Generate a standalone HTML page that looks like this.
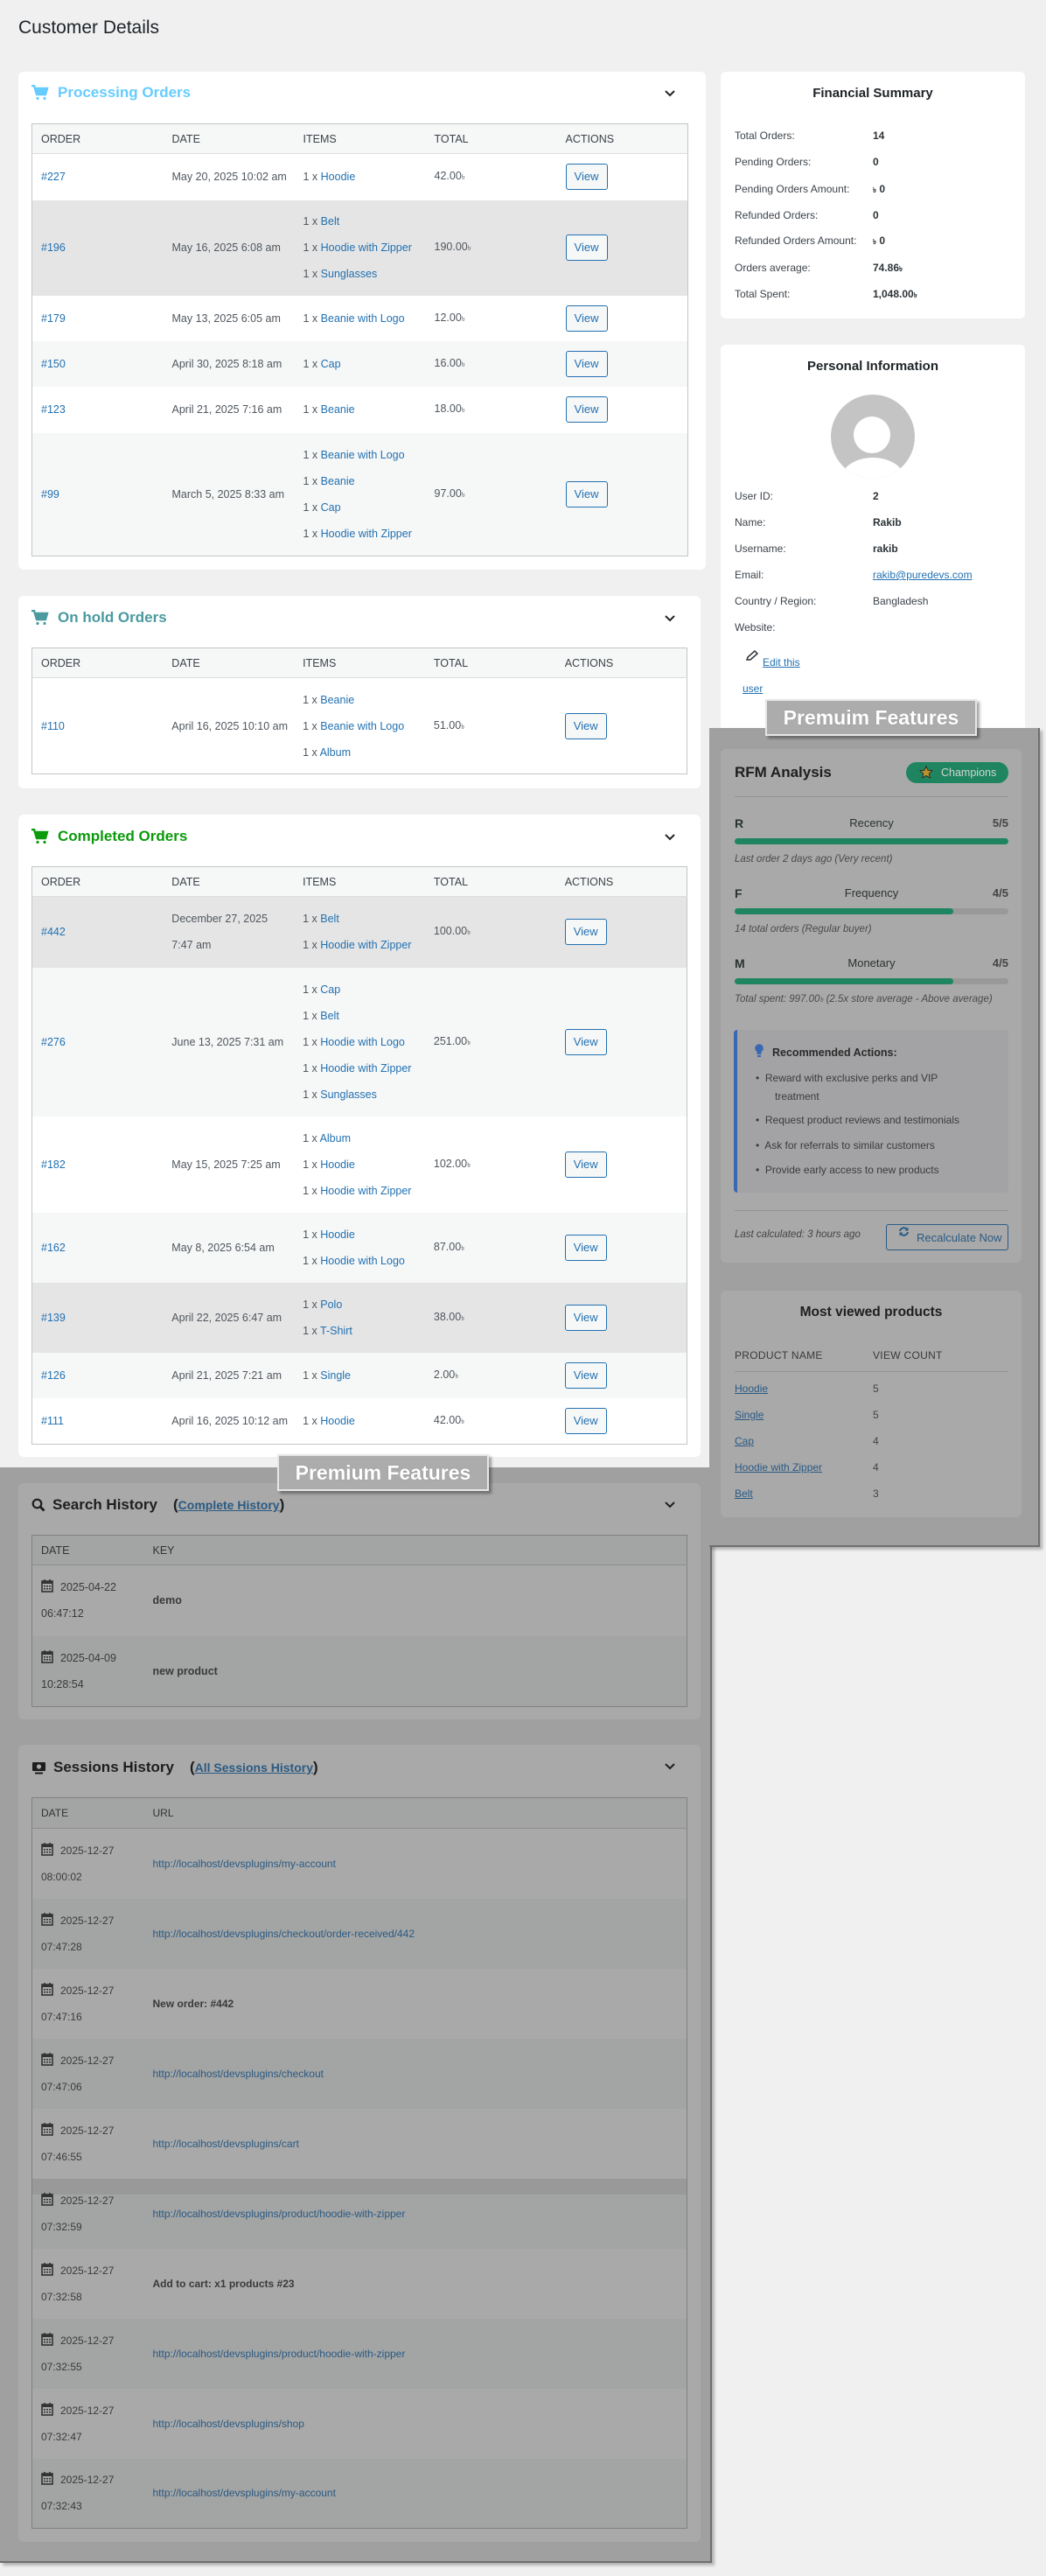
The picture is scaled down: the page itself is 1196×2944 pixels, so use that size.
<!DOCTYPE html>
<html><head><meta charset="utf-8">
<style>
*{box-sizing:border-box;margin:0;padding:0}
body{width:1196px;height:2944px;background:#f0f0f1;font-family:"Liberation Sans",sans-serif;position:relative;overflow:hidden;color:#50575e}
.abs{position:absolute}
.p{position:absolute;background:#fff;border-radius:6px}
.h{position:absolute;font-size:17px;font-weight:bold;display:flex;align-items:center;gap:10px;height:24px}
.chev{position:absolute;width:14px;height:10px}
table{position:absolute;border-collapse:collapse;table-layout:fixed;font-size:12.5px;border:1px solid #c3c4c7}
th{height:34px;text-align:left;font-weight:normal;padding:0 10px;color:#3c434a;background:#f6f7f7;border-bottom:1px solid #dcdcde;font-size:12.5px}
td{padding:0 10px;vertical-align:middle;color:#50575e;white-space:nowrap}
a{color:#2271b1;text-decoration:none}
.it div{line-height:30px}
.btn{display:inline-block;width:48px;height:30px;border:1px solid #2271b1;border-radius:3px;background:#f6f7f7;color:#2271b1;font-size:13px;text-align:center;line-height:28px}
.g{background:#e5e5e5}.l{background:#f6f7f7}.w{background:#fff}
.tk{font-size:8px}
.fr{position:absolute;left:16px;font-size:12px;color:#3c434a}
.fv{position:absolute;left:174px;font-size:12px;font-weight:bold;color:#2c3338}
.ov{position:absolute;background:#a0a0a0;border-right:2px solid #6f6f6f;border-bottom:2px solid #6f6f6f;box-shadow:3px 3px 3px rgba(0,0,0,.25)}
.op{position:absolute;background:#a9a9a9;border-radius:6px}
.lab{position:absolute;background:#acacac;border:2px solid #e6e6e6;box-shadow:3px 3px 3px rgba(0,0,0,.35);color:#fff;font-weight:bold;text-align:center;text-shadow:0 0 1px #777}
table.o{border:1px solid #818181}
table.o th{background:#a3a4a4;color:#333;border-bottom:1px solid #8d8d8d}
table.o td{color:#3a3a3a}
table.o a{color:#2a5a82}
.oa{background:#a9a9a9}.ob{background:#a3a4a4}
.cal{display:inline-block;vertical-align:-2px;margin-right:8px}
</style></head><body>

<div class="abs" style="left:21px;top:20px;font-size:21px;color:#1d2327">Customer Details</div>

<div class="p" style="left:21px;top:82px;width:786px;height:569px"></div>
<div class="h" style="left:36px;top:94px;color:#66ccff">
<svg width="20" height="18" viewBox="0 0 20 18"><path d="M0 1h3l3 10h10l2-7H5" fill="none" stroke="#66ccff" stroke-width="2.4"/><rect x="5" y="4" width="12" height="6" fill="#66ccff"/><circle cx="7" cy="15.5" r="1.6" fill="#66ccff"/><circle cx="15" cy="15.5" r="1.6" fill="#66ccff"/></svg>Processing Orders</div>
<svg class="chev" style="left:759px;top:102px" viewBox="0 0 14 10"><path d="M2 2l5 5 5-5" fill="none" stroke="#1d2327" stroke-width="2"/></svg>
<table style="left:36px;top:141px;width:751px">
<tr><th>ORDER</th><th>DATE</th><th>ITEMS</th><th>TOTAL</th><th>ACTIONS</th></tr>
<tr class="w" style="height:53px"><td><a>#227</a></td><td>May 20, 2025 10:02 am</td><td class="it"><div>1 x <a>Hoodie</a></div></td><td>42.00<span class="tk">৳</span></td><td><span class="btn">View</span></td></tr>
<tr class="g" style="height:109px"><td><a>#196</a></td><td>May 16, 2025 6:08 am</td><td class="it"><div>1 x <a>Belt</a></div><div>1 x <a>Hoodie with Zipper</a></div><div>1 x <a>Sunglasses</a></div></td><td>190.00<span class="tk">৳</span></td><td><span class="btn">View</span></td></tr>
<tr class="w" style="height:52px"><td><a>#179</a></td><td>May 13, 2025 6:05 am</td><td class="it"><div>1 x <a>Beanie with Logo</a></div></td><td>12.00<span class="tk">৳</span></td><td><span class="btn">View</span></td></tr>
<tr class="l" style="height:52px"><td><a>#150</a></td><td>April 30, 2025 8:18 am</td><td class="it"><div>1 x <a>Cap</a></div></td><td>16.00<span class="tk">৳</span></td><td><span class="btn">View</span></td></tr>
<tr class="w" style="height:53px"><td><a>#123</a></td><td>April 21, 2025 7:16 am</td><td class="it"><div>1 x <a>Beanie</a></div></td><td>18.00<span class="tk">৳</span></td><td><span class="btn">View</span></td></tr>
<tr class="l" style="height:141px"><td><a>#99</a></td><td>March 5, 2025 8:33 am</td><td class="it"><div>1 x <a>Beanie with Logo</a></div><div>1 x <a>Beanie</a></div><div>1 x <a>Cap</a></div><div>1 x <a>Hoodie with Zipper</a></div></td><td>97.00<span class="tk">৳</span></td><td><span class="btn">View</span></td></tr>
</table>

<div class="p" style="left:21px;top:681px;width:780px;height:220px"></div>
<div class="h" style="left:36px;top:694px;color:#4a9aa0">
<svg width="20" height="18" viewBox="0 0 20 18"><path d="M0 1h3l3 10h10l2-7H5" fill="none" stroke="#4a9aa0" stroke-width="2.4"/><rect x="5" y="4" width="12" height="6" fill="#4a9aa0"/><circle cx="7" cy="15.5" r="1.6" fill="#4a9aa0"/><circle cx="15" cy="15.5" r="1.6" fill="#4a9aa0"/></svg>On hold Orders</div>
<svg class="chev" style="left:759px;top:702px" viewBox="0 0 14 10"><path d="M2 2l5 5 5-5" fill="none" stroke="#1d2327" stroke-width="2"/></svg>
<table style="left:36px;top:740px;width:750px">
<tr><th>ORDER</th><th>DATE</th><th>ITEMS</th><th>TOTAL</th><th>ACTIONS</th></tr>
<tr class="w" style="height:110px"><td><a>#110</a></td><td>April 16, 2025 10:10 am</td><td class="it"><div>1 x <a>Beanie</a></div><div>1 x <a>Beanie with Logo</a></div><div>1 x <a>Album</a></div></td><td>51.00<span class="tk">৳</span></td><td><span class="btn">View</span></td></tr>
</table>

<div class="p" style="left:21px;top:931px;width:780px;height:734px"></div>
<div class="h" style="left:36px;top:944px;color:#0a9a0a">
<svg width="20" height="18" viewBox="0 0 20 18"><path d="M0 1h3l3 10h10l2-7H5" fill="none" stroke="#0a9a0a" stroke-width="2.4"/><rect x="5" y="4" width="12" height="6" fill="#0a9a0a"/><circle cx="7" cy="15.5" r="1.6" fill="#0a9a0a"/><circle cx="15" cy="15.5" r="1.6" fill="#0a9a0a"/></svg>Completed Orders</div>
<svg class="chev" style="left:759px;top:952px" viewBox="0 0 14 10"><path d="M2 2l5 5 5-5" fill="none" stroke="#1d2327" stroke-width="2"/></svg>
<table style="left:36px;top:990px;width:750px">
<tr><th>ORDER</th><th>DATE</th><th>ITEMS</th><th>TOTAL</th><th>ACTIONS</th></tr>
<tr class="g" style="height:81px"><td><a>#442</a></td><td style="line-height:30px">December 27, 2025<br>7:47 am</td><td class="it"><div>1 x <a>Belt</a></div><div>1 x <a>Hoodie with Zipper</a></div></td><td>100.00<span class="tk">৳</span></td><td><span class="btn">View</span></td></tr>
<tr class="l" style="height:170px"><td><a>#276</a></td><td>June 13, 2025 7:31 am</td><td class="it"><div>1 x <a>Cap</a></div><div>1 x <a>Belt</a></div><div>1 x <a>Hoodie with Logo</a></div><div>1 x <a>Hoodie with Zipper</a></div><div>1 x <a>Sunglasses</a></div></td><td>251.00<span class="tk">৳</span></td><td><span class="btn">View</span></td></tr>
<tr class="w" style="height:110px"><td><a>#182</a></td><td>May 15, 2025 7:25 am</td><td class="it"><div>1 x <a>Album</a></div><div>1 x <a>Hoodie</a></div><div>1 x <a>Hoodie with Zipper</a></div></td><td>102.00<span class="tk">৳</span></td><td><span class="btn">View</span></td></tr>
<tr class="l" style="height:80px"><td><a>#162</a></td><td>May 8, 2025 6:54 am</td><td class="it"><div>1 x <a>Hoodie</a></div><div>1 x <a>Hoodie with Logo</a></div></td><td>87.00<span class="tk">৳</span></td><td><span class="btn">View</span></td></tr>
<tr class="g" style="height:80px"><td><a>#139</a></td><td>April 22, 2025 6:47 am</td><td class="it"><div>1 x <a>Polo</a></div><div>1 x <a>T-Shirt</a></div></td><td>38.00<span class="tk">৳</span></td><td><span class="btn">View</span></td></tr>
<tr class="l" style="height:52px"><td><a>#126</a></td><td>April 21, 2025 7:21 am</td><td class="it"><div>1 x <a>Single</a></div></td><td>2.00<span class="tk">৳</span></td><td><span class="btn">View</span></td></tr>
<tr class="w" style="height:53px"><td><a>#111</a></td><td>April 16, 2025 10:12 am</td><td class="it"><div>1 x <a>Hoodie</a></div></td><td>42.00<span class="tk">৳</span></td><td><span class="btn">View</span></td></tr>
</table>

<div class="ov" style="left:0;top:1677px;width:814px;height:1252px"></div>
<div class="op" style="left:21px;top:1695px;width:780px;height:270px"></div>
<div class="h" style="left:36px;top:1708px;color:#1e1e1e;gap:8px">
<svg width="16" height="16" viewBox="0 0 16 16"><circle cx="6.5" cy="6.5" r="4.8" fill="none" stroke="#1e1e1e" stroke-width="2.2"/><path d="M10 10l4.5 4.5" stroke="#1e1e1e" stroke-width="2.8"/></svg>Search History <span style="margin-left:10px">(<a style="color:#2a5a82;text-decoration:underline;font-size:14px">Complete History</a>)</span></div>
<svg class="chev" style="left:759px;top:1715px" viewBox="0 0 14 10"><path d="M2 2l5 5 5-5" fill="none" stroke="#1e1e1e" stroke-width="2"/></svg>
<table class="o" style="left:36px;top:1754px;width:750px">
<col style="width:128px"><col>
<tr><th>DATE</th><th>KEY</th></tr>
<tr class="oa" style="height:81px"><td style="line-height:30px"><svg class="cal" width="14" height="16" viewBox="0 0 14 16"><rect x="1" y="3" width="12" height="12" fill="none" stroke="#333" stroke-width="1.6"/><rect x="1" y="3" width="12" height="3" fill="#333"/><path d="M4 1v4M10 1v4" stroke="#333" stroke-width="1.6"/><path d="M3 8h2v1.5H3zM6 8h2v1.5H6zM9 8h2v1.5H9zM3 11h2v1.5H3zM6 11h2v1.5H6zM9 11h2v1.5H9z" fill="#333"/></svg>2025-04-22<br>06:47:12</td><td style="font-weight:bold">demo</td></tr>
<tr class="ob" style="height:81px"><td style="line-height:30px"><svg class="cal" width="14" height="16" viewBox="0 0 14 16"><rect x="1" y="3" width="12" height="12" fill="none" stroke="#333" stroke-width="1.6"/><rect x="1" y="3" width="12" height="3" fill="#333"/><path d="M4 1v4M10 1v4" stroke="#333" stroke-width="1.6"/><path d="M3 8h2v1.5H3zM6 8h2v1.5H6zM9 8h2v1.5H9zM3 11h2v1.5H3zM6 11h2v1.5H6zM9 11h2v1.5H9z" fill="#333"/></svg>2025-04-09<br>10:28:54</td><td style="font-weight:bold">new product</td></tr>
</table>

<div class="op" style="left:21px;top:1994px;width:780px;height:911px"></div>
<div class="h" style="left:36px;top:2008px;color:#1e1e1e;gap:8px">
<svg width="17" height="15" viewBox="0 0 17 15"><rect x="1" y="1" width="15" height="10" rx="1" fill="#1e1e1e"/><circle cx="8.5" cy="6" r="2.6" fill="#a9a9a9"/><rect x="4" y="12.5" width="9" height="2" fill="#1e1e1e"/></svg>Sessions History <span style="margin-left:10px">(<a style="color:#2a5a82;text-decoration:underline;font-size:14px">All Sessions History</a>)</span></div>
<svg class="chev" style="left:759px;top:2014px" viewBox="0 0 14 10"><path d="M2 2l5 5 5-5" fill="none" stroke="#1e1e1e" stroke-width="2"/></svg>
<table class="o" style="left:36px;top:2054px;width:750px;font-size:12px">
<col style="width:128px"><col>
<tr><th style="height:35px;font-size:12px">DATE</th><th style="font-size:12px">URL</th></tr>
<tr class="oa" style="height:80px"><td style="line-height:30px"><svg class="cal" width="14" height="16" viewBox="0 0 14 16"><rect x="1" y="3" width="12" height="12" fill="none" stroke="#333" stroke-width="1.6"/><rect x="1" y="3" width="12" height="3" fill="#333"/><path d="M4 1v4M10 1v4" stroke="#333" stroke-width="1.6"/><path d="M3 8h2v1.5H3zM6 8h2v1.5H6zM9 8h2v1.5H9zM3 11h2v1.5H3zM6 11h2v1.5H6zM9 11h2v1.5H9z" fill="#333"/></svg>2025-12-27<br>08:00:02</td><td><a>http://localhost/devsplugins/my-account</a></td></tr>
<tr class="ob" style="height:80px"><td style="line-height:30px"><svg class="cal" width="14" height="16" viewBox="0 0 14 16"><rect x="1" y="3" width="12" height="12" fill="none" stroke="#333" stroke-width="1.6"/><rect x="1" y="3" width="12" height="3" fill="#333"/><path d="M4 1v4M10 1v4" stroke="#333" stroke-width="1.6"/><path d="M3 8h2v1.5H3zM6 8h2v1.5H6zM9 8h2v1.5H9zM3 11h2v1.5H3zM6 11h2v1.5H6zM9 11h2v1.5H9z" fill="#333"/></svg>2025-12-27<br>07:47:28</td><td><a>http://localhost/devsplugins/checkout/order-received/442</a></td></tr>
<tr class="oa" style="height:80px"><td style="line-height:30px"><svg class="cal" width="14" height="16" viewBox="0 0 14 16"><rect x="1" y="3" width="12" height="12" fill="none" stroke="#333" stroke-width="1.6"/><rect x="1" y="3" width="12" height="3" fill="#333"/><path d="M4 1v4M10 1v4" stroke="#333" stroke-width="1.6"/><path d="M3 8h2v1.5H3zM6 8h2v1.5H6zM9 8h2v1.5H9zM3 11h2v1.5H3zM6 11h2v1.5H6zM9 11h2v1.5H9z" fill="#333"/></svg>2025-12-27<br>07:47:16</td><td style="font-weight:bold">New order: #442</td></tr>
<tr class="ob" style="height:80px"><td style="line-height:30px"><svg class="cal" width="14" height="16" viewBox="0 0 14 16"><rect x="1" y="3" width="12" height="12" fill="none" stroke="#333" stroke-width="1.6"/><rect x="1" y="3" width="12" height="3" fill="#333"/><path d="M4 1v4M10 1v4" stroke="#333" stroke-width="1.6"/><path d="M3 8h2v1.5H3zM6 8h2v1.5H6zM9 8h2v1.5H9zM3 11h2v1.5H3zM6 11h2v1.5H6zM9 11h2v1.5H9z" fill="#333"/></svg>2025-12-27<br>07:47:06</td><td><a>http://localhost/devsplugins/checkout</a></td></tr>
<tr class="oa" style="height:80px"><td style="line-height:30px"><svg class="cal" width="14" height="16" viewBox="0 0 14 16"><rect x="1" y="3" width="12" height="12" fill="none" stroke="#333" stroke-width="1.6"/><rect x="1" y="3" width="12" height="3" fill="#333"/><path d="M4 1v4M10 1v4" stroke="#333" stroke-width="1.6"/><path d="M3 8h2v1.5H3zM6 8h2v1.5H6zM9 8h2v1.5H9zM3 11h2v1.5H3zM6 11h2v1.5H6zM9 11h2v1.5H9z" fill="#333"/></svg>2025-12-27<br>07:46:55</td><td><a>http://localhost/devsplugins/cart</a></td></tr>
<tr class="ob" style="height:80px;background:linear-gradient(#999 0,#999 18px,#a3a4a4 18px)"><td style="line-height:30px"><svg class="cal" width="14" height="16" viewBox="0 0 14 16"><rect x="1" y="3" width="12" height="12" fill="none" stroke="#333" stroke-width="1.6"/><rect x="1" y="3" width="12" height="3" fill="#333"/><path d="M4 1v4M10 1v4" stroke="#333" stroke-width="1.6"/><path d="M3 8h2v1.5H3zM6 8h2v1.5H6zM9 8h2v1.5H9zM3 11h2v1.5H3zM6 11h2v1.5H6zM9 11h2v1.5H9z" fill="#333"/></svg>2025-12-27<br>07:32:59</td><td><a>http://localhost/devsplugins/product/hoodie-with-zipper</a></td></tr>
<tr class="oa" style="height:80px"><td style="line-height:30px"><svg class="cal" width="14" height="16" viewBox="0 0 14 16"><rect x="1" y="3" width="12" height="12" fill="none" stroke="#333" stroke-width="1.6"/><rect x="1" y="3" width="12" height="3" fill="#333"/><path d="M4 1v4M10 1v4" stroke="#333" stroke-width="1.6"/><path d="M3 8h2v1.5H3zM6 8h2v1.5H6zM9 8h2v1.5H9zM3 11h2v1.5H3zM6 11h2v1.5H6zM9 11h2v1.5H9z" fill="#333"/></svg>2025-12-27<br>07:32:58</td><td style="font-weight:bold">Add to cart: x1 products #23</td></tr>
<tr class="ob" style="height:80px"><td style="line-height:30px"><svg class="cal" width="14" height="16" viewBox="0 0 14 16"><rect x="1" y="3" width="12" height="12" fill="none" stroke="#333" stroke-width="1.6"/><rect x="1" y="3" width="12" height="3" fill="#333"/><path d="M4 1v4M10 1v4" stroke="#333" stroke-width="1.6"/><path d="M3 8h2v1.5H3zM6 8h2v1.5H6zM9 8h2v1.5H9zM3 11h2v1.5H3zM6 11h2v1.5H6zM9 11h2v1.5H9z" fill="#333"/></svg>2025-12-27<br>07:32:55</td><td><a>http://localhost/devsplugins/product/hoodie-with-zipper</a></td></tr>
<tr class="oa" style="height:80px"><td style="line-height:30px"><svg class="cal" width="14" height="16" viewBox="0 0 14 16"><rect x="1" y="3" width="12" height="12" fill="none" stroke="#333" stroke-width="1.6"/><rect x="1" y="3" width="12" height="3" fill="#333"/><path d="M4 1v4M10 1v4" stroke="#333" stroke-width="1.6"/><path d="M3 8h2v1.5H3zM6 8h2v1.5H6zM9 8h2v1.5H9zM3 11h2v1.5H3zM6 11h2v1.5H6zM9 11h2v1.5H9z" fill="#333"/></svg>2025-12-27<br>07:32:47</td><td><a>http://localhost/devsplugins/shop</a></td></tr>
<tr class="ob" style="height:80px"><td style="line-height:30px"><svg class="cal" width="14" height="16" viewBox="0 0 14 16"><rect x="1" y="3" width="12" height="12" fill="none" stroke="#333" stroke-width="1.6"/><rect x="1" y="3" width="12" height="3" fill="#333"/><path d="M4 1v4M10 1v4" stroke="#333" stroke-width="1.6"/><path d="M3 8h2v1.5H3zM6 8h2v1.5H6zM9 8h2v1.5H9zM3 11h2v1.5H3zM6 11h2v1.5H6zM9 11h2v1.5H9z" fill="#333"/></svg>2025-12-27<br>07:32:43</td><td><a>http://localhost/devsplugins/my-account</a></td></tr>
</table>
<div class="lab" style="left:317px;top:1662px;width:242px;height:42px;font-size:23px;line-height:38px">Premium Features</div>

<div class="p" style="left:824px;top:82px;width:348px;height:282px">
<div class="abs" style="left:0;width:348px;top:16px;text-align:center;font-size:15px;font-weight:bold;color:#1d2327">Financial Summary</div>
<div class="fr" style="top:66px">Total Orders:</div><div class="fv" style="top:66px">14</div>
<div class="fr" style="top:96px">Pending Orders:</div><div class="fv" style="top:96px">0</div>
<div class="fr" style="top:127px">Pending Orders Amount:</div><div class="fv" style="top:127px"><span class="tk">৳</span> 0</div>
<div class="fr" style="top:157px">Refunded Orders:</div><div class="fv" style="top:157px">0</div>
<div class="fr" style="top:186px">Refunded Orders Amount:</div><div class="fv" style="top:186px"><span class="tk">৳</span> 0</div>
<div class="fr" style="top:217px">Orders average:</div><div class="fv" style="top:217px">74.86<span class="tk">৳</span></div>
<div class="fr" style="top:247px">Total Spent:</div><div class="fv" style="top:247px">1,048.00<span class="tk">৳</span></div>
</div>

<div class="p" style="left:824px;top:394px;width:348px;height:460px">
<div class="abs" style="left:0;width:348px;top:16px;text-align:center;font-size:15px;font-weight:bold;color:#1d2327">Personal Information</div>
<svg class="abs" style="left:126px;top:57px" width="96" height="96" viewBox="0 0 96 96"><defs><clipPath id="cc"><circle cx="48" cy="48" r="48"/></clipPath></defs><circle cx="48" cy="48" r="48" fill="#c4c4c4"/><g clip-path="url(#cc)"><circle cx="47" cy="46" r="21" fill="#fff"/><ellipse cx="48" cy="96" rx="36" ry="24" fill="#fff"/></g></svg>
<div class="fr" style="top:166px">User ID:</div><div class="fv" style="top:166px">2</div>
<div class="fr" style="top:196px">Name:</div><div class="fv" style="top:196px">Rakib</div>
<div class="fr" style="top:226px">Username:</div><div class="fv" style="top:226px">rakib</div>
<div class="fr" style="top:256px">Email:</div><div class="fv" style="top:256px;font-weight:normal"><a style="text-decoration:underline">rakib@puredevs.com</a></div>
<div class="fr" style="top:286px">Country / Region:</div><div class="fv" style="top:286px;font-weight:normal;color:#3c434a">Bangladesh</div>
<div class="fr" style="top:316px">Website:</div>
<svg class="abs" style="left:29px;top:349px" width="14" height="12" viewBox="0 0 14 12"><path d="M1 11l1-3 8-7 3 3-8 7z" fill="none" stroke="#2c3338" stroke-width="1.5"/></svg>
<div class="abs" style="left:48px;top:356px;font-size:12px"><a style="text-decoration:underline">Edit this</a></div>
<div class="abs" style="left:25px;top:386px;font-size:12px"><a style="text-decoration:underline">user</a></div>
</div>

<div class="ov" style="left:811px;top:832px;width:378px;height:936px"></div>
<div class="op" style="left:824px;top:856px;width:344px;height:587px">
<div class="abs" style="left:16px;top:17px;font-size:17px;font-weight:bold;color:#1e1e1e">RFM Analysis</div>
<div class="abs" style="left:212px;top:15px;width:117px;height:24px;border-radius:12px;background:#1f8560;color:#cfd6d2;font-size:12.5px;line-height:24px;padding-left:40px">Champions</div>
<svg class="abs" style="left:227px;top:19px" width="16" height="15" viewBox="0 0 16 15"><path d="M8 .8l2.1 4.5 4.9.5-3.7 3.3 1.1 4.9L8 11.5 3.6 14l1.1-4.9L1 5.8l4.9-.5z" fill="#b8922e" stroke="#222" stroke-width=".9"/></svg>
<div class="abs" style="left:16px;top:54px;width:313px;border-top:1px solid #939393"></div>

<div class="abs" style="left:16px;top:77px;width:313px;font-size:13px;color:#2a332f"><b style="font-size:14px">R</b><span class="abs" style="left:0;width:313px;text-align:center;top:0">Recency</span><span class="abs" style="right:0;top:0;color:#444;font-weight:bold">5/5</span></div>
<div class="abs" style="left:16px;top:102px;width:313px;height:7px;border-radius:4px;background:#1f8560"></div>
<div class="abs" style="left:16px;top:120px;font-size:11.5px;font-style:italic;color:#4a4a4a">Last order 2 days ago (Very recent)</div>

<div class="abs" style="left:16px;top:157px;width:313px;font-size:13px;color:#2a332f"><b style="font-size:14px">F</b><span class="abs" style="left:0;width:313px;text-align:center;top:0">Frequency</span><span class="abs" style="right:0;top:0;color:#444;font-weight:bold">4/5</span></div>
<div class="abs" style="left:16px;top:182px;width:313px;height:7px;border-radius:4px;background:#999"><div style="width:80%;height:7px;border-radius:4px;background:#1f8560"></div></div>
<div class="abs" style="left:16px;top:200px;font-size:11.5px;font-style:italic;color:#4a4a4a">14 total orders (Regular buyer)</div>

<div class="abs" style="left:16px;top:237px;width:313px;font-size:13px;color:#2a332f"><b style="font-size:14px">M</b><span class="abs" style="left:0;width:313px;text-align:center;top:0">Monetary</span><span class="abs" style="right:0;top:0;color:#444;font-weight:bold">4/5</span></div>
<div class="abs" style="left:16px;top:262px;width:313px;height:7px;border-radius:4px;background:#999"><div style="width:80%;height:7px;border-radius:4px;background:#1f8560"></div></div>
<div class="abs" style="left:16px;top:280px;font-size:11.5px;font-style:italic;color:#4a4a4a">Total spent: 997.00<span class="tk">৳</span> (2.5x store average - Above average)</div>

<div class="abs" style="left:15px;top:321px;width:314px;height:186px;background:#a3a3a5;border-left:4px solid #3a68b0;border-radius:4px">
<svg class="abs" style="left:20px;top:16px" width="10" height="16" viewBox="0 0 10 16"><circle cx="5" cy="5" r="4.8" fill="#3a68b0"/><rect x="2.5" y="8" width="5" height="4" fill="#3a68b0"/><rect x="3" y="13" width="4" height="2" fill="#3a68b0"/></svg>
<div class="abs" style="left:40px;top:19px;font-size:12.5px;font-weight:bold;color:#2a2a2a">Recommended Actions:</div>
<ul class="abs" style="left:21px;top:45px;width:280px;font-size:12px;color:#3b3b3b;list-style:none;line-height:21px">
<li style="padding-left:12px;text-indent:-12px">•&nbsp; Reward with exclusive perks and VIP<br>&nbsp;&nbsp;&nbsp;treatment</li>
<li style="margin-top:6px">•&nbsp; Request product reviews and testimonials</li>
<li style="margin-top:8px">•&nbsp; Ask for referrals to similar customers</li>
<li style="margin-top:7px">•&nbsp; Provide early access to new products</li>
</ul></div>
<div class="abs" style="left:16px;top:527px;width:313px;border-top:1px solid #939393"></div>
<div class="abs" style="left:16px;top:549px;font-size:11.5px;font-style:italic;color:#444">Last calculated: 3 hours ago</div>
<div class="abs" style="left:189px;top:543px;width:140px;height:30px;border:1px solid #2a5a85;border-radius:3px;color:#2a5a85;font-size:13px;line-height:30px;padding-left:34px">Recalculate Now</div>
<svg class="abs" style="left:203px;top:545px" width="13" height="13" viewBox="0 0 13 13"><path d="M2 6a4.5 4 0 0 1 8.5-1.5M11 7a4.5 4 0 0 1-8.5 1.5" fill="none" stroke="#2a5a85" stroke-width="2"/><path d="M11.5 1.5v4h-4zM1.5 11.5v-4h4z" fill="#2a5a85"/></svg>
</div>

<div class="op" style="left:824px;top:1475px;width:344px;height:259px">
<div class="abs" style="left:0;width:344px;top:16px;text-align:center;font-size:15.5px;font-weight:bold;color:#1e1e1e">Most viewed products</div>
<div class="abs" style="left:16px;top:67px;font-size:12px;color:#3a3a3a;letter-spacing:.3px">PRODUCT NAME</div>
<div class="abs" style="left:174px;top:67px;font-size:12px;color:#3a3a3a;letter-spacing:.3px">VIEW COUNT</div>
<div class="abs" style="left:16px;top:92px;width:313px;border-top:1px solid #939393"></div>
<div class="abs" style="left:16px;top:97px;font-size:12px;line-height:30px;color:#2a5a85;text-decoration:underline">Hoodie<br>Single<br>Cap<br>Hoodie with Zipper<br>Belt</div>
<div class="abs" style="left:174px;top:97px;font-size:12px;line-height:30px;color:#444">5<br>5<br>4<br>4<br>3</div>
</div>
<div class="lab" style="left:875px;top:799px;width:242px;height:42px;font-size:23px;line-height:38px">Premuim Features</div>

</body></html>
